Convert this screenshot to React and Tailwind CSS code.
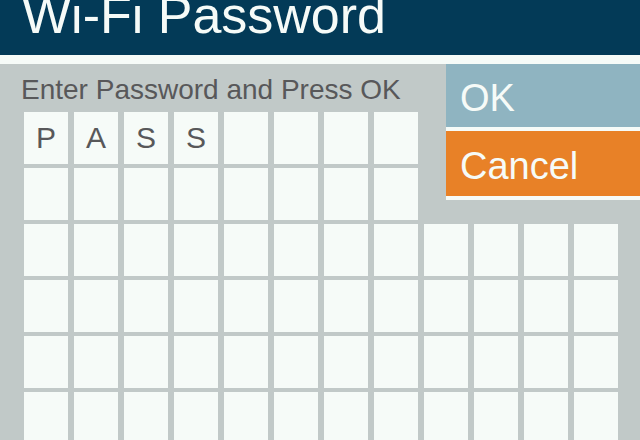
import React from "react";

const FONT = { fontFamily: '"Liberation Sans", Arial, sans-serif' };

function Cell({ ch }) {
  return (
    <div className="w-[44px] h-[52px] bg-[#f6fbf8] flex items-center justify-center text-[30px] leading-[30px] text-[#58585a]">
      {ch}
    </div>
  );
}

function Row({ count, letters = [] }) {
  return (
    <div className="flex gap-[6px] h-[52px]">
      {Array.from({ length: count }).map((_, i) => (
        <Cell key={i} ch={letters[i] || ""} />
      ))}
    </div>
  );
}

export default function App() {
  return (
    <div className="w-[640px] h-[440px] overflow-hidden bg-[#c1c9c8]" style={FONT}>
      <div className="h-[55px] bg-[#033a57] overflow-hidden pl-[22px]">
        <div className="text-[52px] leading-[30px] text-[#f6fbf8] whitespace-nowrap">Wi-Fi Password</div>
      </div>
      <div className="h-[9px] bg-[#f6fbf8]" />
      <div className="flex flex-col gap-[4px]">
        <div className="flex h-[156px]">
          <div className="w-[446px] flex flex-col">
            <div className="h-[48px] pt-[12px] pl-[21px] text-[28px] leading-[28px] text-[#58585a] whitespace-nowrap">
              Enter Password and Press OK
            </div>
            <div className="pl-[24px] flex flex-col gap-[4px]">
              <Row count={8} letters={["P", "A", "S", "S"]} />
              <Row count={8} />
            </div>
          </div>
          <div className="w-[194px] flex flex-col">
            <div className="h-[63px] bg-[#8fb4c1] pt-[15px] pl-[14px] text-[38px] leading-[38px] text-[#f6fbf8]">OK</div>
            <div className="h-[4px] bg-[#f6fbf8]" />
            <div className="h-[65px] bg-[#e88127] pt-[16px] pl-[14px] text-[38px] leading-[38px] text-[#f6fbf8]">Cancel</div>
            <div className="h-[4px] bg-[#f6fbf8]" />
          </div>
        </div>
        <div className="pl-[24px] flex flex-col gap-[4px]">
          <Row count={12} />
          <Row count={12} />
          <Row count={12} />
          <Row count={12} />
        </div>
      </div>
    </div>
  );
}
